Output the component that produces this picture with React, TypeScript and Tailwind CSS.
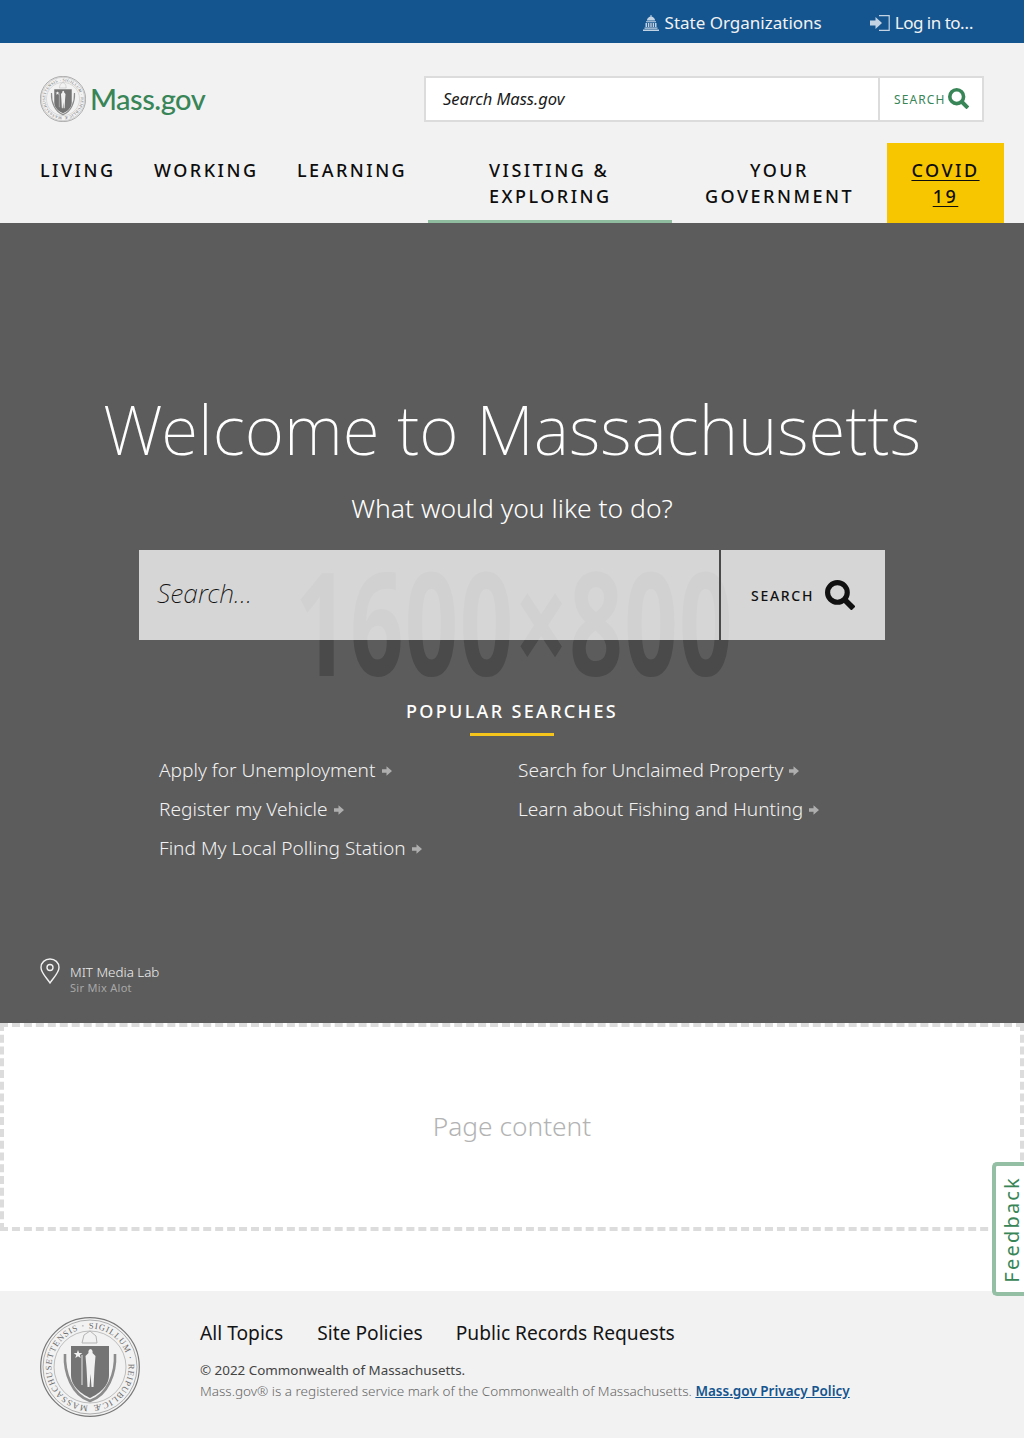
const Seal = ({ className }: { className: string }) => (
  <svg viewBox="0 0 100 100" className={className}>
    <defs>
      <path id="sealRing" d="M50 88.5 a38.5 38.5 0 1 1 0 -77 a38.5 38.5 0 1 1 0 77" />
    </defs>
    <circle cx="50" cy="50" r="49.3" fill="#f2f2f2" stroke="#777" strokeWidth="1.2" />
    <circle cx="50" cy="50" r="47" fill="none" stroke="#999" strokeWidth="0.8" />
    <circle cx="50" cy="50" r="36" fill="none" stroke="#999" strokeWidth="0.6" />
    <text fontFamily="'Liberation Serif', serif" fontSize="8.6" fill="#6a6a6a">
      <textPath href="#sealRing" startOffset="2" textLength="236">
        MASSACHUSETTENSIS ⋅ SIGILLUM ⋅ REIPUBLICÆ
      </textPath>
    </text>
    <path d="M31 29 H69 V58 C69 70 58 77 50 81 C42 77 31 70 31 58 Z" fill="#747474" />
    <path d="M42 26 L44 18 L50 14 L56 19 L57 26 Z" fill="none" stroke="#b5b5b5" strokeWidth="1" />
    <path d="M25 37 C24 56 32 78 50 84 C68 78 76 56 75 37" fill="none" stroke="#8c8c8c" strokeWidth="2.6" />
    <path d="M38 33 l1.1 3 3.2 0 -2.5 2 .9 3 -2.7-1.8 -2.7 1.8 .9-3 -2.5-2 3.2 0 z" fill="#f2f2f2" />
    <path d="M50 32 c2 0 3 2 2.5 4 l3 3 -1 12 -1 19 -2 0 -1-13 -1 13 -2 0 -1-19 -1-12 3-3 c-.5-2 .5-4 2.5-4z" fill="#f0f0f0" />
    <path d="M42 38 V68" stroke="#f0f0f0" strokeWidth="0.9" />
  </svg>
);

const SearchIcon = ({ className }: { className: string }) => (
  <svg viewBox="0 0 29 29" fill="none" stroke="currentColor" className={className}>
    <circle cx="12" cy="12" r="9.5" strokeWidth="5" />
    <path d="M19 19 L27.5 27.5" strokeWidth="5.5" />
  </svg>
);

const ArrowIcon = () => (
  <svg viewBox="0 0 10 10" className="ml-[6px] inline-block h-[10px] w-[10px] text-[#aeaeae]" fill="currentColor">
    <path d="M0 3.2 H4.5 V0.3 L10 5 L4.5 9.7 V6.8 H0 Z" />
  </svg>
);

const searches = [
  ["Apply for Unemployment", "Register my Vehicle", "Find My Local Polling Station"],
  ["Search for Unclaimed Property", "Learn about Fishing and Hunting"],
];

const App = () => {
  return (
    <div className="relative h-[1438px] w-[1024px] overflow-hidden bg-white font-['Noto_Sans',sans-serif]">
      <div className="flex h-[43px] items-center justify-end bg-[#14558f] pt-[2px] pr-[51px] text-[17px] text-[#f2f2f2]">
        <div className="flex items-center">
          <svg viewBox="0 0 16 16" className="mr-[6px] h-4 w-4 text-[#c3d3e3]" fill="currentColor">
            <path d="M7.5 0 h1 v1.5 c2 .4 3.4 2 3.6 4 H3.9 c.2-2 1.6-3.6 3.6-4z M3 6.3 h10 v1 H3z M2.5 8 h1.6 v4 H2.5z M5 8 h1.3 v4 H5z M7.3 8 h1.4 v4 H7.3z M9.7 8 h1.3 v4 H9.7z M11.9 8 h1.6 v4 h-1.6z M1.5 12.6 h13 v1.2 h-13z M0 14.4 h16 v1.6 H0z" />
          </svg>
          State Organizations
        </div>
        <div className="ml-[48px] flex items-center tracking-[-0.5px]">
          <svg viewBox="0 0 20 16" className="mr-[5px] h-[16px] w-[20px] text-[#c3d3e3]">
            <path d="M0 5.5 H5.5 V2 L12 8 L5.5 14 V10.5 H0 Z" fill="currentColor" />
            <path d="M9 .6 H19.2 V15.4 H9" fill="none" stroke="currentColor" strokeWidth="1.2" />
          </svg>
          Log in to…
        </div>
      </div>

      <header className="h-[180px] bg-[#f2f2f2]">
        <div className="flex h-[100px] items-start justify-between px-10 pt-[33px]">
          <div className="flex items-center">
            <Seal className="h-[46px] w-[46px]" />
            <span className="ml-[4px] font-['Lato',sans-serif] text-[29px] leading-[46px] font-medium tracking-[-0.5px] text-[#388557]">Mass.gov</span>
          </div>
          <div className="flex h-[46px] w-[560px] border-2 border-[#dcdcdc] bg-white">
            <div className="flex flex-1 items-center pt-[1px] pl-[17px] text-[16.5px] text-[#1a1a1a] italic">Search Mass.gov</div>
            <div className="flex w-[104px] items-center border-l-2 border-[#dcdcdc] pt-[1px] pl-[14px] text-[#388557]">
              <span className="text-[12px] tracking-[1.1px]">SEARCH</span>
              <SearchIcon className="mb-[2px] ml-[3px] h-[21px] w-[21px]" />
            </div>
          </div>
        </div>
        <nav className="flex h-[80px] pl-10 text-[18px] leading-[26px] font-medium tracking-[2.5px] text-[#0d0d0d]">
          <div className="w-[114px] pt-[14px]">LIVING</div>
          <div className="w-[143px] pt-[14px]">WORKING</div>
          <div className="w-[131px] pt-[14px]">LEARNING</div>
          <div className="relative h-full w-[244px] pt-[14px] pl-[61px]">
            VISITING &amp;<br />EXPLORING
            <div className="absolute right-0 bottom-0 left-0 h-[3px] bg-[#8fbb9f]" />
          </div>
          <div className="w-[215px] pt-[14px] text-center">YOUR<br />GOVERNMENT</div>
          <div className="h-full w-[117px] bg-[#f8c600] pt-[14px] text-center underline underline-offset-[3px]">COVID<br />19</div>
        </nav>
      </header>

      <section className="relative h-[800px] bg-[#5c5c5c] text-white">
        <div className="absolute inset-0 flex items-center justify-center pb-[6px] pl-1">
          <span className="scale-x-[0.65] text-[144px] leading-none font-bold tracking-[2px] whitespace-nowrap text-[#4a4a4a]">
            1600×800
          </span>
        </div>
        <div className="relative flex flex-col items-center">
          <h1 className="mt-[161px] text-[67.6px] leading-[90px] font-extralight">Welcome to Massachusetts</h1>
          <p className="mt-[14px] text-[26.5px] leading-[40px] font-light">What would you like to do?</p>
          <div className="mt-[22px] flex h-[90px] w-[746px] bg-white/75 text-[#111]">
            <div className="flex flex-1 items-center border-r-2 border-[#4a4a4a] pb-[2px] pl-[18px] text-[26.5px] font-extralight italic">Search…</div>
            <div className="flex w-[164px] items-center pl-[30px] text-[#111]">
              <span className="text-[14px] font-medium tracking-[1.7px]">SEARCH</span>
              <SearchIcon className="ml-[11px] h-[30px] w-[30px]" />
            </div>
          </div>
          <div className="mt-[59px] text-[18px] leading-[24px] font-medium tracking-[2.33px]">POPULAR SEARCHES</div>
          <div className="mt-[10px] h-[3px] w-[84px] bg-[#f6c51b]" />
        </div>
        <div className="relative mt-[15px] flex pl-[159px] text-[19.1px] font-light text-[#f2f2f2]">
          {searches.map((col, i) => (
            <ul key={i} className={i === 0 ? "w-[359px]" : ""}>
              {col.map((s) => (
                <li key={s} className="flex h-[39px] items-center">
                  {s}
                  <ArrowIcon />
                </li>
              ))}
            </ul>
          ))}
        </div>
        <div className="absolute top-[735px] left-10 flex">
          <svg viewBox="0 0 20 26" className="h-[26px] w-[20px]" fill="none" stroke="#f2f2f2" strokeWidth="1.4">
            <path d="M10 25 C7 20 1 15 1 9.5 C1 4.5 5 1 10 1 C15 1 19 4.5 19 9.5 C19 15 13 20 10 25 Z" />
            <circle cx="10" cy="9.5" r="3" />
          </svg>
          <div className="ml-[10px] pt-[5px]">
            <div className="text-[13.4px] leading-[18px] font-light text-[#f0f0f0]">MIT Media Lab</div>
            <div className="text-[11px] leading-[14px] tracking-[0.3px] text-[#a8a8a8]">Sir Mix Alot</div>
          </div>
        </div>
      </section>

      <section className="flex h-[208px] items-center justify-center border-4 border-dashed border-[#dcdcdc] bg-white">
        <span className="text-[26.3px] font-light text-[#b3b3b3]">Page content</span>
      </section>

      <footer className="mt-[60px] flex h-[147px] bg-[#f2f2f2] px-10 pt-[26px]">
        <Seal className="h-[100px] w-[100px]" />
        <div className="ml-[60px]">
          <div className="flex h-[32px] items-center text-[19.2px] text-[#141414]">
            <span>All Topics</span>
            <span className="ml-[34px]">Site Policies</span>
            <span className="ml-[33px]">Public Records Requests</span>
          </div>
          <p className="mt-[11px] text-[13.4px] leading-[21px] text-[#444]">© 2022 Commonwealth of Massachusetts.</p>
          <p className="text-[13.5px] leading-[21px] font-light text-[#666]">
            Mass.gov® is a registered service mark of the Commonwealth of Massachusetts.{" "}
            <span className="font-semibold text-[#14558f] underline">Mass.gov Privacy Policy</span>
          </p>
        </div>
      </footer>

      <div className="absolute top-[1162px] right-0 flex h-[134px] w-[32px] items-center justify-center rounded-l-[5px] border-4 border-r-0 border-[#94bfa4] bg-white">
        <span className="rotate-180 pr-[3px] text-[20px] tracking-[2.2px] text-[#388557] [writing-mode:vertical-rl]">Feedback</span>
      </div>
    </div>
  );
};

export default App;
